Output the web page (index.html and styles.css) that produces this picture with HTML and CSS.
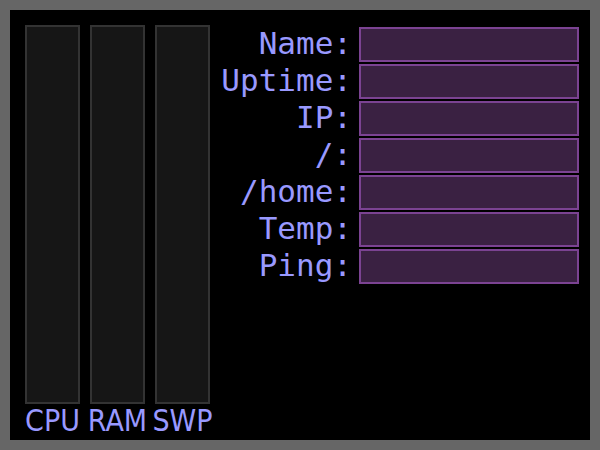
FILE: index.html
```html
<!DOCTYPE html>
<html>
<head>
<meta charset="utf-8">
<link rel="stylesheet" href="styles.css">
</head>
<body>
<div class="screen">
  <div class="meters">
    <div class="bar"></div>
    <div class="bar"></div>
    <div class="bar"></div>
    <div class="mlabel">CPU</div>
    <div class="mlabel">RAM</div>
    <div class="mlabel">SWP</div>
  </div>
  <div class="info">
    <div class="label">Name:</div><div class="field"></div>
    <div class="label">Uptime:</div><div class="field"></div>
    <div class="label">IP:</div><div class="field"></div>
    <div class="label">/:</div><div class="field"></div>
    <div class="label">/home:</div><div class="field"></div>
    <div class="label">Temp:</div><div class="field"></div>
    <div class="label">Ping:</div><div class="field"></div>
  </div>
</div>
</body>
</html>
```
FILE: styles.css
```css
html, body {
  margin: 0;
  padding: 0;
  background: #666666;
}
body {
  padding: 10px;
  width: 580px;
  height: 430px;
}
.screen {
  width: 580px;
  height: 430px;
  background: #000;
  box-sizing: border-box;
  padding: 15px 11px 0 15px;
  display: flex;
  justify-content: space-between;
}
.meters {
  display: grid;
  grid-template-columns: 55px 55px 55px;
  grid-template-rows: 379px auto;
  column-gap: 10px;
}
.bar {
  background: #161616;
  border: 2px solid #333333;
  box-sizing: border-box;
}
.mlabel {
  font-family: "DejaVu Sans Condensed", "DejaVu Sans", sans-serif;
  font-stretch: condensed;
  font-size: 30px;
  color: #9999ff;
  line-height: 33px;
  white-space: nowrap;
  display: flex;
  justify-content: center;
}
.info {
  display: grid;
  grid-template-columns: auto 220px;
  grid-auto-rows: 35px;
  row-gap: 2px;
  column-gap: 7px;
  margin-top: 2px;
  align-content: start;
}
.label {
  font-family: "DejaVu Sans Mono", monospace;
  font-size: 31px;
  color: #9999ff;
  text-align: right;
  line-height: 33px;
  height: 35px;
  white-space: nowrap;
}
.field {
  background: #3a2142;
  border: 2px solid #7b4392;
  box-sizing: border-box;
}
```
